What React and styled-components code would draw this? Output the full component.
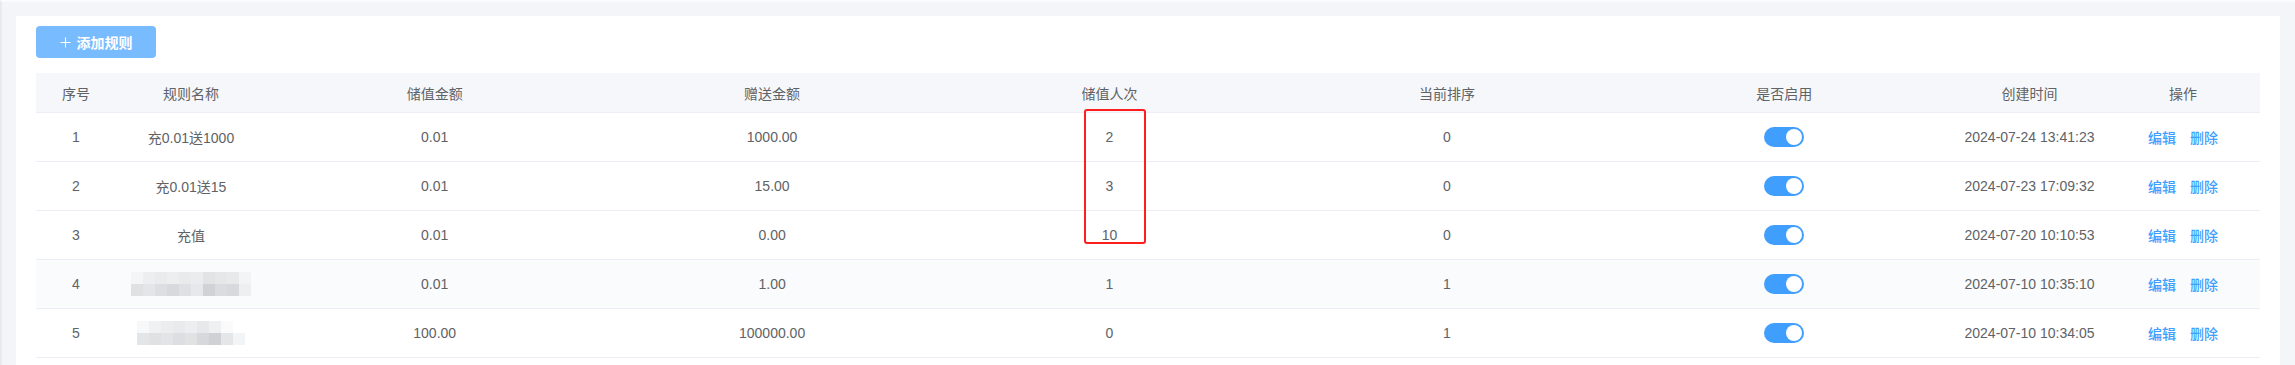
import React from 'react';
import styled, { createGlobalStyle } from 'styled-components';

const GlobalStyle = createGlobalStyle`
  html, body {
    margin: 0;
    padding: 0;
    background: #f4f5f9;
  }
  body {
    font-family: "Liberation Sans", Arial, "Noto Sans CJK SC", sans-serif;
    font-size: 14px;
    color: #606266;
  }
`;

const Page = styled.div`
  box-sizing: border-box;
  min-height: 365px;
  padding: 14px 15px 0 14px;
  border-left: 2px solid #e9e9f1;
  border-top: 2px solid #fbfbfd;
  background: #f4f5f9;
`;

const Card = styled.section`
  box-sizing: border-box;
  background: #ffffff;
  min-height: 349px;
  padding: 10px 20px 20px;
`;

const Toolbar = styled.div`
  display: flex;
  align-items: center;
  margin-bottom: 15px;
`;

const AddButton = styled.button`
  display: inline-flex;
  align-items: center;
  justify-content: center;
  gap: 6px;
  width: 120px;
  height: 32px;
  padding: 0;
  border: none;
  border-radius: 4px;
  background: #79bbff;
  color: #ffffff;
  font-family: "Liberation Sans", Arial, "Noto Sans CJK SC", sans-serif;
  font-size: 14px;
  font-weight: 600;
  cursor: not-allowed;
`;

const Table = styled.div`
  position: relative;
  width: 100%;
`;

const cols = '80px 150px repeat(5, 1fr) 153px 154px';

const HeaderRow = styled.div`
  display: grid;
  grid-template-columns: ${cols};
  box-sizing: border-box;
  height: 40px;
  background: #f5f7fa;
  border-bottom: 1px solid #ebeef5;
`;

const BodyRow = styled.div`
  display: grid;
  grid-template-columns: ${cols};
  box-sizing: border-box;
  height: 49px;
  background: ${(p) => (p.$hover ? '#fafbfc' : '#ffffff')};
  border-bottom: 1px solid #ebeef5;
`;

const Cell = styled.div`
  display: flex;
  align-items: center;
  justify-content: center;
  white-space: nowrap;
  font-size: 14px;
  color: #606266;
`;

const HeadCell = styled(Cell)`
  color: #5f6266;
`;

const Track = styled.span`
  display: flex;
  justify-content: ${(p) => (p.$on ? 'flex-end' : 'flex-start')};
  align-items: center;
  box-sizing: border-box;
  width: 40px;
  height: 20px;
  padding: 2px;
  border-radius: 10px;
  background: ${(p) => (p.$on ? '#409eff' : '#dcdfe6')};
`;

const Knob = styled.span`
  width: 16px;
  height: 16px;
  border-radius: 50%;
  background: #ffffff;
`;

const Actions = styled.div`
  display: flex;
  align-items: center;
  gap: 14px;
`;

const LinkButton = styled.span`
  color: #409eff;
  font-family: "Noto Sans CJK SC", sans-serif;
  font-size: 14px;
  font-weight: 500;
  cursor: pointer;
`;

const Mosaic = styled.div`
  display: grid;
  grid-template-columns: repeat(${(p) => p.$cols}, 12px);
  grid-auto-rows: 12px;
`;

const Tile = styled.span`
  background: ${(p) => p.$c};
`;

const Highlight = styled.div`
  position: absolute;
  left: 1048px;
  top: 36px;
  width: 62px;
  height: 135px;
  box-sizing: border-box;
  border: 2px solid #ff1d1d;
  border-radius: 3px;
  pointer-events: none;
`;

const PlusIcon = () => (
  <svg width="11" height="11" viewBox="0 0 11 11" aria-hidden="true">
    <path d="M5.5 0.5v10M0.5 5.5h10" stroke="#ffffff" strokeWidth="1.1" fill="none" />
  </svg>
);

const Switch = ({ on }) => (
  <Track $on={on}>
    <Knob />
  </Track>
);

const mosaicA = [
  '#f4f5f6', '#eceef0', '#e9ebed', '#eceef0', '#e8eaec', '#eaecee', '#e1e3e5', '#e5e7e9', '#e7e9eb', '#f3f4f5',
  '#dfe1e3', '#e3e5e7', '#dcdee1', '#d7d9dc', '#dee0e3', '#e6e8ea', '#d0d2d6', '#dadcdf', '#d7d9dc', '#eeeff1',
];

const mosaicB = [
  '#f7f8f9', '#f0f1f3', '#ebedef', '#e8eaec', '#eceef0', '#e6e8ea', '#eef0f1', '#fafafa', '#ffffff',
  '#e3e5e7', '#dfe1e3', '#e2e4e6', '#dcdee1', '#e0e2e4', '#d6d8db', '#cfd1d5', '#e4e6e8', '#f3f4f5',
];

const Blurred = ({ tiles, cols }) => (
  <Mosaic $cols={cols}>
    {tiles.map((c, i) => (
      <Tile key={i} $c={c} />
    ))}
  </Mosaic>
);

const headers = ['序号', '规则名称', '储值金额', '赠送金额', '储值人次', '当前排序', '是否启用', '创建时间', '操作'];

const rows = [
  { id: 1, name: '充0.01送1000', amount: '0.01', gift: '1000.00', count: '2', sort: '0', time: '2024-07-24 13:41:23' },
  { id: 2, name: '充0.01送15', amount: '0.01', gift: '15.00', count: '3', sort: '0', time: '2024-07-23 17:09:32' },
  { id: 3, name: '充值', amount: '0.01', gift: '0.00', count: '10', sort: '0', time: '2024-07-20 10:10:53' },
  { id: 4, blur: 'a', amount: '0.01', gift: '1.00', count: '1', sort: '1', time: '2024-07-10 10:35:10', hover: true },
  { id: 5, blur: 'b', amount: '100.00', gift: '100000.00', count: '0', sort: '1', time: '2024-07-10 10:34:05' },
];

export default function App() {
  return (
    <>
      <GlobalStyle />
      <Page>
        <Card>
          <Toolbar>
            <AddButton disabled>
              <PlusIcon />
              <span>添加规则</span>
            </AddButton>
          </Toolbar>
          <Table>
            <HeaderRow>
              {headers.map((h) => (
                <HeadCell key={h}>{h}</HeadCell>
              ))}
            </HeaderRow>
            {rows.map((r) => (
              <BodyRow key={r.id} $hover={r.hover}>
                <Cell>{r.id}</Cell>
                <Cell>
                  {r.blur === 'a' ? (
                    <Blurred tiles={mosaicA} cols={10} />
                  ) : r.blur === 'b' ? (
                    <Blurred tiles={mosaicB} cols={9} />
                  ) : (
                    r.name
                  )}
                </Cell>
                <Cell>{r.amount}</Cell>
                <Cell>{r.gift}</Cell>
                <Cell>{r.count}</Cell>
                <Cell>{r.sort}</Cell>
                <Cell>
                  <Switch on />
                </Cell>
                <Cell>{r.time}</Cell>
                <Cell>
                  <Actions>
                    <LinkButton>编辑</LinkButton>
                    <LinkButton>删除</LinkButton>
                  </Actions>
                </Cell>
              </BodyRow>
            ))}
            <Highlight />
          </Table>
        </Card>
      </Page>
    </>
  );
}
